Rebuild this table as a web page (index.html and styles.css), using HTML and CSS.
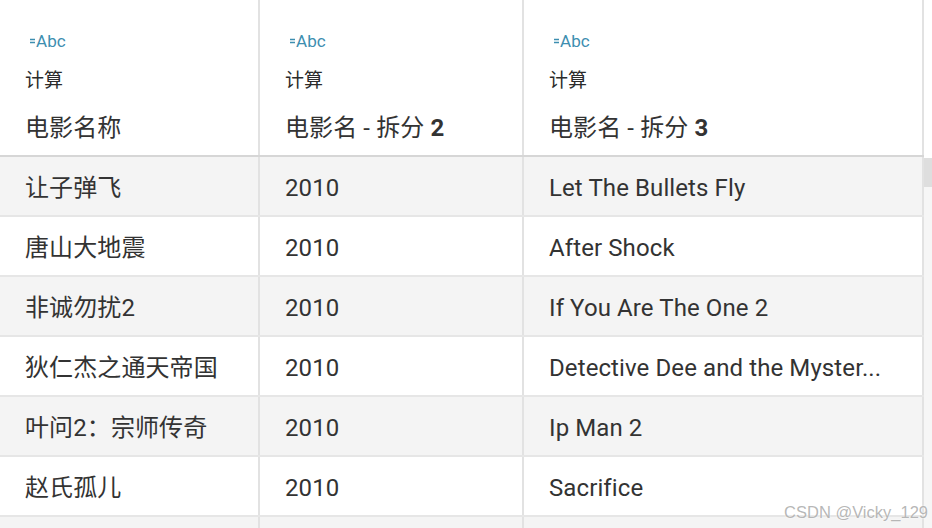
FILE: index.html
```html
<!DOCTYPE html>
<html lang="zh">
<head>
<meta charset="utf-8">
<title>表格</title>
<link rel="stylesheet" href="styles.css">
</head>
<body>
<div class="page">
  <div class="table">
    <div class="row header">
      <div class="cell hcell">
        <div class="type"><svg class="calc" width="6" height="6" viewBox="0 0 6 6"><path d="M0 1.5H5M0 4.5H5" stroke="#3d8eb0" stroke-width="1.3"/></svg>Abc</div>
        <div class="kind">计算</div>
        <div class="title">电影名称</div>
      </div>
      <div class="cell hcell">
        <div class="type"><svg class="calc" width="6" height="6" viewBox="0 0 6 6"><path d="M0 1.5H5M0 4.5H5" stroke="#3d8eb0" stroke-width="1.3"/></svg>Abc</div>
        <div class="kind">计算</div>
        <div class="title">电影名 - 拆分 <b>2</b></div>
      </div>
      <div class="cell hcell">
        <div class="type"><svg class="calc" width="6" height="6" viewBox="0 0 6 6"><path d="M0 1.5H5M0 4.5H5" stroke="#3d8eb0" stroke-width="1.3"/></svg>Abc</div>
        <div class="kind">计算</div>
        <div class="title">电影名 - 拆分 <b>3</b></div>
      </div>
    </div>
    <div class="row odd"><div class="cell">让子弹飞</div><div class="cell">2010</div><div class="cell">Let The Bullets Fly</div></div>
    <div class="row"><div class="cell">唐山大地震</div><div class="cell">2010</div><div class="cell">After Shock</div></div>
    <div class="row odd"><div class="cell">非诚勿扰2</div><div class="cell">2010</div><div class="cell">If You Are The One 2</div></div>
    <div class="row"><div class="cell">狄仁杰之通天帝国</div><div class="cell">2010</div><div class="cell">Detective Dee and the Myster...</div></div>
    <div class="row odd"><div class="cell">叶问2：宗师传奇</div><div class="cell">2010</div><div class="cell">Ip Man 2</div></div>
    <div class="row"><div class="cell">赵氏孤儿</div><div class="cell">2010</div><div class="cell">Sacrifice</div></div>
    <div class="row odd"><div class="cell">&nbsp;</div><div class="cell">&nbsp;</div><div class="cell">&nbsp;</div></div>
  </div>
  <div class="scroll"><div class="thumb"></div></div>
  <div class="watermark">CSDN @Vicky_129</div>
</div>
</body>
</html>
```

FILE: styles.css
```css
html, body {
  margin: 0;
  padding: 0;
  background: #ffffff;
  overflow: hidden;
}
.page {
  position: relative;
  display: flex;
  width: 932px;
  height: 528px;
  overflow: hidden;
  font-family: Roboto, "Noto Sans CJK SC", sans-serif;
  color: #333333;
}
.table {
  width: 924px;
  flex: none;
}
.row {
  display: grid;
  grid-template-columns: 260px 264px 400px;
  height: 58px;
  border-bottom: 2px solid #e6e6e6;
  background: #ffffff;
}
.row.odd {
  background: #f4f4f4;
}
.row.header {
  height: 155px;
  border-bottom: 2px solid #d6d6d6;
  background: #ffffff;
}
.cell {
  border-right: 2px solid #e2e2e2;
  padding: 2px 20px 0 25px;
  font-size: 24px;
  line-height: 58px;
  white-space: nowrap;
  overflow: hidden;
  min-width: 0;
  letter-spacing: 0.1px;
}
.hcell {
  display: flex;
  flex-direction: column;
  align-items: flex-start;
  justify-content: flex-start;
  padding-top: 31px;
  line-height: 30px;
}
.type {
  display: flex;
  align-items: center;
  height: 20px;
  font-size: 17px;
  color: #3d8eb0;
  margin-left: 5px;
}
.kind {
  height: 20px;
  line-height: 20px;
  margin-top: 20px;
  font-size: 19px;
  color: #2b2b2b;
}
.title {
  height: 30px;
  line-height: 30px;
  margin-top: 22px;
  font-size: 24px;
}
.title b {
  font-weight: 700;
}
.scroll {
  width: 8px;
  flex: none;
  padding-top: 158px;
  background: linear-gradient(#ffffff 0 158px, #f6f6f6 158px);
}
.thumb {
  height: 29px;
  background: #dedede;
}
.watermark {
  position: absolute;
  right: 4px;
  bottom: 6px;
  font-family: "Liberation Sans", Arial, sans-serif;
  font-size: 16.5px;
  color: rgba(170, 170, 170, 0.85);
  text-shadow: 0 0 2px #ffffff;
}
```
